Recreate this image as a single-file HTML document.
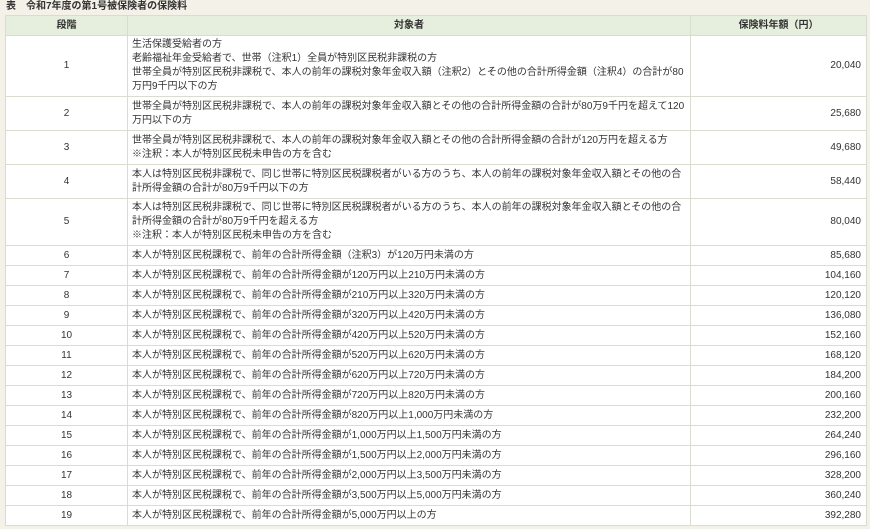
<!DOCTYPE html>
<html><head><meta charset="utf-8"><style>
html,body{margin:0;padding:0;background:#f3f1e8;width:870px;height:529px;overflow:hidden}
body{font-family:"Liberation Sans","Noto Sans CJK JP",sans-serif;font-size:10px;color:#333}
.t{position:absolute;left:6px;top:0;font-weight:bold;font-size:10px;line-height:14px;color:#333}
table{position:absolute;left:5px;top:15px;width:861px;border-collapse:collapse;table-layout:fixed;background:#fff}
td,th{border:1px solid #d9ddd0;padding:0 4px;line-height:14px;vertical-align:middle}
th{background:#e6efdd;font-weight:bold;height:19px;text-align:center}
td.c{text-align:center}
td.r{text-align:right;padding-right:5px}
tr.s td{height:19px}
</style></head><body>
<div class="t">表　令和7年度の第1号被保険者の保険料</div>
<table>
<colgroup><col style="width:122px"><col style="width:563px"><col style="width:176px"></colgroup>
<tr><th>段階</th><th>対象者</th><th>保険料年額（円）</th></tr>
<tr><td class="c" style="height:60px">1</td><td>生活保護受給者の方<br>老齢福祉年金受給者で、世帯（注釈1）全員が特別区民税非課税の方<br>世帯全員が特別区民税非課税で、本人の前年の課税対象年金収入額（注釈2）とその他の合計所得金額（注釈4）の合計が80万円9千円以下の方</td><td class="r">20,040</td></tr>
<tr><td class="c" style="height:33px">2</td><td>世帯全員が特別区民税非課税で、本人の前年の課税対象年金収入額とその他の合計所得金額の合計が80万9千円を超えて120万円以下の方</td><td class="r">25,680</td></tr>
<tr><td class="c" style="height:33px">3</td><td>世帯全員が特別区民税非課税で、本人の前年の課税対象年金収入額とその他の合計所得金額の合計が120万円を超える方<br>※注釈：本人が特別区民税未申告の方を含む</td><td class="r">49,680</td></tr>
<tr><td class="c" style="height:33px">4</td><td>本人は特別区民税非課税で、同じ世帯に特別区民税課税者がいる方のうち、本人の前年の課税対象年金収入額とその他の合計所得金額の合計が80万9千円以下の方</td><td class="r">58,440</td></tr>
<tr><td class="c" style="height:46px">5</td><td>本人は特別区民税非課税で、同じ世帯に特別区民税課税者がいる方のうち、本人の前年の課税対象年金収入額とその他の合計所得金額の合計が80万9千円を超える方<br>※注釈：本人が特別区民税未申告の方を含む</td><td class="r">80,040</td></tr>
<tr class="s"><td class="c">6</td><td>本人が特別区民税課税で、前年の合計所得金額（注釈3）が120万円未満の方</td><td class="r">85,680</td></tr>
<tr class="s"><td class="c">7</td><td>本人が特別区民税課税で、前年の合計所得金額が120万円以上210万円未満の方</td><td class="r">104,160</td></tr>
<tr class="s"><td class="c">8</td><td>本人が特別区民税課税で、前年の合計所得金額が210万円以上320万円未満の方</td><td class="r">120,120</td></tr>
<tr class="s"><td class="c">9</td><td>本人が特別区民税課税で、前年の合計所得金額が320万円以上420万円未満の方</td><td class="r">136,080</td></tr>
<tr class="s"><td class="c">10</td><td>本人が特別区民税課税で、前年の合計所得金額が420万円以上520万円未満の方</td><td class="r">152,160</td></tr>
<tr class="s"><td class="c">11</td><td>本人が特別区民税課税で、前年の合計所得金額が520万円以上620万円未満の方</td><td class="r">168,120</td></tr>
<tr class="s"><td class="c">12</td><td>本人が特別区民税課税で、前年の合計所得金額が620万円以上720万円未満の方</td><td class="r">184,200</td></tr>
<tr class="s"><td class="c">13</td><td>本人が特別区民税課税で、前年の合計所得金額が720万円以上820万円未満の方</td><td class="r">200,160</td></tr>
<tr class="s"><td class="c">14</td><td>本人が特別区民税課税で、前年の合計所得金額が820万円以上1,000万円未満の方</td><td class="r">232,200</td></tr>
<tr class="s"><td class="c">15</td><td>本人が特別区民税課税で、前年の合計所得金額が1,000万円以上1,500万円未満の方</td><td class="r">264,240</td></tr>
<tr class="s"><td class="c">16</td><td>本人が特別区民税課税で、前年の合計所得金額が1,500万円以上2,000万円未満の方</td><td class="r">296,160</td></tr>
<tr class="s"><td class="c">17</td><td>本人が特別区民税課税で、前年の合計所得金額が2,000万円以上3,500万円未満の方</td><td class="r">328,200</td></tr>
<tr class="s"><td class="c">18</td><td>本人が特別区民税課税で、前年の合計所得金額が3,500万円以上5,000万円未満の方</td><td class="r">360,240</td></tr>
<tr class="s"><td class="c">19</td><td>本人が特別区民税課税で、前年の合計所得金額が5,000万円以上の方</td><td class="r">392,280</td></tr>
</table>
</body></html>
